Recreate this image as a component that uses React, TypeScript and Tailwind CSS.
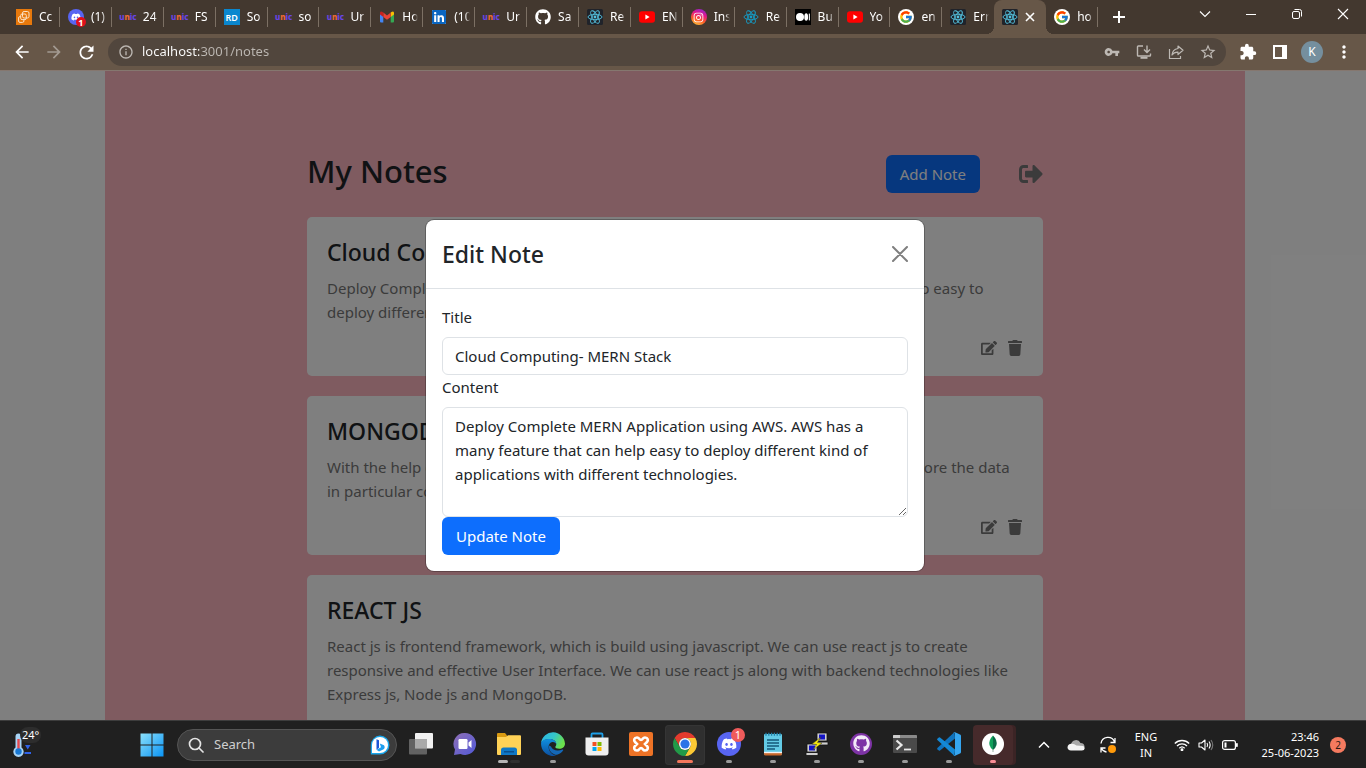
import React, { useId, useState } from "react";
import type { ReactNode } from "react";
import { FaDiscord, FaEdit, FaGithub, FaLinkedin, FaSignOutAlt, FaTrash, FaInstagram } from "react-icons/fa";
import { FcGoogle } from "react-icons/fc";
import { MdArrowBack, MdArrowForward, MdExtension, MdInfoOutline, MdMoreVert, MdRefresh, MdStarBorder, MdVpnKey } from "react-icons/md";

/* ---------- Favicons ---------- */

function AwsIcon() {
  return (
    <svg viewBox="0 0 16 16" className="size-4" aria-hidden="true">
      <rect width="16" height="16" fill="#e8790c" />
      <g fill="none" stroke="#fbe3c8" strokeWidth="1">
        <rect x="6.5" y="2.5" width="6.5" height="6.5" rx="1.6" />
        <rect x="4.7" y="5" width="5.6" height="5.6" rx="1.4" />
        <path d="M4.6 7.6H3.9Q2.6 7.6 2.6 9v3q0 1.4 1.4 1.4h2.5q1.4 0 1.4-1.4v-1.3" />
      </g>
    </svg>
  );
}

function DiscordBadgeIcon() {
  return (
    <span className="relative flex size-4 items-center justify-center rounded-full bg-[#5865f2] text-white">
      <FaDiscord size={10} />
      <span className="absolute -right-0.5 -bottom-0.5 flex size-2.5 items-center justify-center rounded-full bg-[#e0101c] text-[9px] leading-none font-bold">
        1
      </span>
    </span>
  );
}

function UnicIcon() {
  return (
    <span className="flex w-4 items-center justify-center text-[8px] leading-4 font-extrabold text-[#6a45e8]">
      u<span className="text-[#ee6a35]">n</span>ic
    </span>
  );
}

function RdIcon() {
  return (
    <span className="flex size-4 items-center justify-center bg-[#0a87cf] text-[9px] leading-none font-semibold text-white">
      RD
    </span>
  );
}

function GmailIcon() {
  return (
    <svg viewBox="0 0 16 16" className="size-4" aria-hidden="true">
      <path d="M1 4.2v8.3q0 1 1 1h2.3V7z" fill="#4285f4" />
      <path d="M15 4.2v8.3q0 1-1 1h-2.3V7z" fill="#34a853" />
      <path d="M11.7 3.6 13 2.7q2-1 2 1.3v1.4L11.7 8z" fill="#fbbc04" />
      <path d="M4.3 3.6 8 6.5l3.7-2.9V8L8 10.8 4.3 8z" fill="#ea4335" />
      <path d="M4.3 3.6 3 2.7Q1 1.700 1 4v1.400L4.300 8z" fill="#c5221f" />
    </svg>
  );
}

function LinkedinIcon() {
  return (
    <span className="flex size-4 items-center justify-center">
      <span className="flex size-3.5 items-center justify-center bg-white text-[#0a66c2]">
        <FaLinkedin size={16} className="shrink-0" />
      </span>
    </span>
  );
}

function ReactAtom({ color, tile }: { color: string; tile?: boolean }) {
  return (
    <svg viewBox="0 0 16 16" className="size-4" aria-hidden="true">
      {tile && <rect width="16" height="16" rx="1.500" fill="#20232a" />}
      <g fill="none" stroke={color} strokeWidth="0.900">
        <ellipse cx="8" cy="8" rx="7" ry="2.700" />
        <ellipse cx="8" cy="8" rx="7" ry="2.700" transform="rotate(60 8 8)" />
        <ellipse cx="8" cy="8" rx="7" ry="2.700" transform="rotate(120 8 8)" />
      </g>
      <circle cx="8" cy="8" r="1.400" fill={color} />
    </svg>
  );
}

function YoutubeIcon() {
  return (
    <svg viewBox="0 0 16 16" className="size-4" aria-hidden="true">
      <rect y="2.300" width="16" height="11.400" rx="3" fill="#f00" />
      <path d="M6.400 5.600 10.600 8l-4.200 2.400z" fill="#fff" />
    </svg>
  );
}

function InstagramIcon() {
  return (
    <span className="flex size-4 items-center justify-center rounded-full bg-[linear-gradient(20deg,#ffc93c_5%,#fb5a25_35%,#e3158c_65%,#7a2be0)] text-white">
      <FaInstagram size={11} />
    </span>
  );
}

function MediumIcon() {
  return (
    <svg viewBox="0 0 16 16" className="size-4" aria-hidden="true">
      <rect width="16" height="16" fill="#000" />
      <circle cx="5" cy="8" r="4" fill="#fff" />
      <ellipse cx="11.200" cy="8" rx="1.900" ry="3.800" fill="#fff" />
      <rect x="13.800" y="4.600" width="1.100" height="6.800" fill="#fff" />
    </svg>
  );
}

function GoogleIcon() {
  return (
    <span className="flex size-4 items-center justify-center rounded-full bg-white">
      <FcGoogle size={14} />
    </span>
  );
}

/* ---------- Browser chrome ---------- */

type Tab = { label: string; icon: ReactNode; active?: boolean };

const tabs: Tab[] = [
  { label: "Cc", icon: <AwsIcon /> },
  { label: "(1)", icon: <DiscordBadgeIcon /> },
  { label: "24", icon: <UnicIcon /> },
  { label: "FS", icon: <UnicIcon /> },
  { label: "So", icon: <RdIcon /> },
  { label: "so", icon: <UnicIcon /> },
  { label: "Ur", icon: <UnicIcon /> },
  { label: "Ho", icon: <GmailIcon /> },
  { label: "(10", icon: <LinkedinIcon /> },
  { label: "Ur", icon: <UnicIcon /> },
  { label: "Sa", icon: <FaGithub size={16} color="#fff" /> },
  { label: "Re", icon: <ReactAtom color="#53c1de" tile /> },
  { label: "EN", icon: <YoutubeIcon /> },
  { label: "Ins", icon: <InstagramIcon /> },
  { label: "Re", icon: <ReactAtom color="#149eca" /> },
  { label: "Bu", icon: <MediumIcon /> },
  { label: "Yo", icon: <YoutubeIcon /> },
  { label: "en", icon: <GoogleIcon /> },
  { label: "Err", icon: <ReactAtom color="#53c1de" tile /> },
  { label: "", icon: <ReactAtom color="#53c1de" tile />, active: true },
  { label: "ho", icon: <GoogleIcon /> },
];

function TabStrip() {
  return (
    <div className="flex h-[34px] shrink-0 bg-[#43382f] pl-2 text-white">
      <div className="flex max-w-[1090px] min-w-0 flex-1">
        {tabs.map((tab, i) =>
          tab.active ? (
            <div key={i} className="relative flex min-w-0 flex-1 items-center gap-1 rounded-t-lg bg-[#675748] pl-2">
              <span className="absolute bottom-0 -left-2 size-2 bg-[radial-gradient(circle_at_0_0,#43382f_8px,#675748_8px)]" />
              <span className="absolute -right-2 bottom-0 size-2 bg-[radial-gradient(circle_at_100%_0,#43382f_8px,#675748_8px)]" />
              <span className="flex size-4 shrink-0">{tab.icon}</span>
              <button aria-label="Close tab" className="flex size-4 items-center justify-center">
                <svg viewBox="0 0 16 16" className="size-4" aria-hidden="true">
                  <path d="m4 4 8 8m0-8-8 8" stroke="#fff" strokeWidth="1.600" />
                </svg>
              </button>
            </div>
          ) : (
            <button key={i} className="flex min-w-0 flex-1 items-center pl-2 text-left">
              <span className="mr-[7px] flex size-4 shrink-0 items-center">{tab.icon}</span>
              <span className="min-w-0 flex-1 overflow-hidden [mask-image:linear-gradient(90deg,#000_70%,transparent)] text-xs whitespace-nowrap">
                {tab.label}
              </span>
              <span className={tabs[i + 1]?.active ? "ml-1 h-5 w-px" : "ml-1 h-5 w-px bg-[#7c7064]"} />
            </button>
          ),
        )}
      </div>
      <button aria-label="New tab" className="flex w-[42px] items-center justify-center">
        <svg viewBox="0 0 14 14" className="size-3.5" aria-hidden="true">
          <path d="M7 1v12M1 7h12" stroke="#fff" strokeWidth="2" />
        </svg>
      </button>
      <div className="ml-auto flex h-7">
        <button aria-label="Search tabs" className="flex w-[46px] items-center justify-center">
          <svg viewBox="0 0 12 12" className="size-3" aria-hidden="true">
            <path d="m1 3.500 5 5 5-5" fill="none" stroke="#fff" strokeWidth="1.100" />
          </svg>
        </button>
        <button aria-label="Minimize" className="flex w-[46px] items-center justify-center">
          <span className="h-px w-2.5 bg-white" />
        </button>
        <button aria-label="Restore" className="flex w-[46px] items-center justify-center">
          <svg viewBox="0 0 12 12" className="size-3" fill="none" stroke="#fff" aria-hidden="true">
            <rect x="1.500" y="3.500" width="7" height="7" rx="1.500" />
            <path d="M3.500 1.500H8.500q2 0 2 2v5" />
          </svg>
        </button>
        <button aria-label="Close window" className="flex w-[46px] items-center justify-center">
          <svg viewBox="0 0 12 12" className="size-3" aria-hidden="true">
            <path d="m1 1 10 10M11 1 1 11" stroke="#fff" strokeWidth="1.100" />
          </svg>
        </button>
      </div>
    </div>
  );
}

function ToolButton({ label, children }: { label: string; children: ReactNode }) {
  return (
    <button aria-label={label} className="flex h-7 w-8 shrink-0 items-center justify-center">
      {children}
    </button>
  );
}

function Toolbar() {
  return (
    <div className="flex h-[37px] shrink-0 items-center border-b border-[#85776f] bg-[#675748] px-1.5 text-white">
      <ToolButton label="Back">
        <MdArrowBack size={20} />
      </ToolButton>
      <ToolButton label="Forward">
        <MdArrowForward size={20} className="text-[#a39a91]" />
      </ToolButton>
      <ToolButton label="Reload">
        <MdRefresh size={21} />
      </ToolButton>
      <div className="ml-1.5 flex h-7 min-w-0 flex-1 items-center rounded-full bg-[#51463d] pr-0.5 pl-2.5 text-[#bdb8b3]">
        <MdInfoOutline size={16} className="shrink-0" />
        <input
          aria-label="Address"
          defaultValue="localhost:3001/notes"
          className="ml-2 min-w-0 flex-1 bg-[linear-gradient(90deg,#fff_57px,#bdb8b3_57px)] bg-clip-text text-[13px] text-transparent outline-none"
        />
        <ToolButton label="Passwords">
          <MdVpnKey size={16} />
        </ToolButton>
        <ToolButton label="Install app">
          <svg viewBox="0 0 16 16" className="size-4" fill="none" stroke="currentColor" strokeWidth="1.400" aria-hidden="true">
            <path d="M7 2H2.300q-.8 0-.8.8v8.400q0 .8.8.8h11.400q.8 0 .8-.8V9.500" />
            <path d="M11 1.500v6.500M8 5.500l3 3 3-3" />
            <path d="M4.500 13.800h7" strokeWidth="2" />
          </svg>
        </ToolButton>
        <ToolButton label="Share">
          <svg viewBox="0 0 16 16" className="size-4" fill="none" stroke="currentColor" strokeWidth="1.200" aria-hidden="true">
            <path d="M1.500 5v9.500h11V12" />
            <path d="M10 2l5 4.300-5 4.200V8.200Q6 8 4 11q.4-5.600 6-6.500z" strokeLinejoin="round" />
          </svg>
        </ToolButton>
        <ToolButton label="Bookmark">
          <MdStarBorder size={18} />
        </ToolButton>
      </div>
      <div className="ml-1.5 flex">
        <ToolButton label="Extensions">
          <MdExtension size={18} />
        </ToolButton>
        <ToolButton label="Side panel">
          <svg viewBox="0 0 14 14" className="size-3.5" aria-hidden="true">
            <path d="M0 0h14v14H0zM2 2v10h7V2z" fill="#fff" fillRule="evenodd" />
          </svg>
        </ToolButton>
        <ToolButton label="Profile">
          <span className="flex size-[22px] items-center justify-center rounded-full bg-[#758f9e] text-xs leading-none">K</span>
        </ToolButton>
        <ToolButton label="Menu">
          <MdMoreVert size={20} />
        </ToolButton>
      </div>
    </div>
  );
}

/* ---------- Notes page ---------- */

const notes = [
  {
    title: "Cloud Computing- MERN Stack",
    content:
      "Deploy Complete MERN Application using AWS. AWS has a many feature that can help easy to deploy different kind of applications with different technologies.",
  },
  {
    title: "MONGODB",
    content:
      "With the help of MongoDB we can create the database and its collections and then store the data in particular collection.",
  },
  {
    title: "REACT JS",
    content:
      "React js is frontend framework, which is build using javascript. We can use react js to create responsive and effective User Interface. We can use react js along with backend technologies like Express js, Node js and MongoDB.",
  },
];

function NoteCard({ title, content }: { title: string; content: string }) {
  return (
    <article className="rounded-[5px] bg-white px-5 pt-[19px] pb-4">
      <h2 className="mb-2 text-[23px] leading-8 font-medium">{title}</h2>
      <p className="text-[15px] leading-6 text-[#777]">{content}</p>
      <div className="mt-3 flex h-6 items-center justify-end gap-2.5 text-[#777]">
        <button aria-label={`Edit ${title}`}>
          <FaEdit size={16} />
        </button>
        <button aria-label={`Delete ${title}`}>
          <FaTrash size={16} />
        </button>
      </div>
    </article>
  );
}

function EditModal({ onClose }: { onClose: () => void }) {
  const id = useId();
  return (
    <div className="absolute inset-0 flex items-center justify-center bg-black/50 pr-4">
      <div role="dialog" aria-labelledby={`${id}-h`} className="w-full max-w-[498px] rounded-lg bg-white shadow-[0_0_0_1px_rgba(0,0,0,0.25)]">
        <header className="flex items-center justify-between border-b border-[#dee2e6] p-4">
          <h2 id={`${id}-h`} className="text-[23px] leading-9 font-medium">
            Edit Note
          </h2>
          <button aria-label="Close" onClick={onClose} className="flex size-4 items-center justify-center text-[#7f7f7f]">
            <svg viewBox="0 0 16 16" className="size-4" aria-hidden="true">
              <path d="m1 1 14 14M15 1 1 15" stroke="currentColor" strokeWidth="2" strokeLinecap="round" />
            </svg>
          </button>
        </header>
        <form className="p-4 text-[15px] leading-6" onSubmit={(e) => e.preventDefault()}>
          <label htmlFor={`${id}-t`} className="mb-2 block">
            Title
          </label>
          <input
            id={`${id}-t`}
            defaultValue={notes[0].title}
            className="block h-[38px] w-full rounded-md border border-[#dee2e6] px-3 outline-none"
          />
          <label htmlFor={`${id}-c`} className="mb-2 block">
            Content
          </label>
          <textarea
            id={`${id}-c`}
            rows={4}
            defaultValue={notes[0].content}
            className="block h-[110px] w-full rounded-md border border-[#dee2e6] px-3 py-1.5 outline-none"
          />
          <button type="submit" className="block h-[38px] rounded-md bg-[#0d6efd] px-3.5 text-white">
            Update Note
          </button>
        </form>
      </div>
    </div>
  );
}

function NotesPage() {
  const [editing, setEditing] = useState(true);
  return (
    <main className="relative min-h-0 flex-1 overflow-hidden bg-white pr-4 text-[#212529]">
      <div className="mx-auto min-h-full max-w-[1140px] bg-[#ffb6c1] pt-21">
        <div className="mx-auto max-w-[736px]">
          <div className="flex h-[38px] items-center">
            <h1 className="self-start text-[31px] leading-8 font-medium">My Notes</h1>
            <button className="ml-auto h-[38px] rounded-md bg-[#0d6efd] px-3.5 text-[15px] leading-6 text-white">Add Note</button>
            <button aria-label="Sign out" className="ml-[39px] text-[#777]">
              <FaSignOutAlt size={24} />
            </button>
          </div>
          <div className="mt-6 flex flex-col gap-5">
            {notes.map((note) => (
              <NoteCard key={note.title} {...note} />
            ))}
          </div>
        </div>
      </div>
      {editing && <EditModal onClose={() => setEditing(false)} />}
    </main>
  );
}

/* ---------- Taskbar ---------- */

function WindowsLogo() {
  return (
    <svg viewBox="0 0 24 24" className="size-6" aria-hidden="true">
      <defs>
        <linearGradient id="win" x1="0" y1="0" x2="1" y2="1">
          <stop offset="0" stopColor="#8be0fb" />
          <stop offset="1" stopColor="#0a94f5" />
        </linearGradient>
      </defs>
      <path d="M.5.500h11v11H.5zM12.500.500h11v11h-11zM.5 12.500h11v11H.5zM12.500 12.500h11v11h-11z" fill="url(#win)" />
    </svg>
  );
}

function BingIcon() {
  return (
    <svg viewBox="0 0 20 20" className="size-5" aria-hidden="true">
      <path d="M10 .5A9.500 9.500 0 1 1 10 19.500H.8V10A9.500 9.500 0 0 1 10 .5z" fill="#18a5ea" />
      <path d="M10 2A8 8 0 1 1 10 18H2V10a8 8 0 0 1 8-8z" fill="#fff" />
      <path d="M6.500 4.200 9 5.200v7.500l-2.500 2z" fill="#1b56d8" />
      <path d="m6.500 14.700 4.500-2.500-1.200-3.700 4.200 1.700q1.700 2.800-.8 4.200L9 16.500z" fill="#1d9ff0" />
    </svg>
  );
}

function TaskViewIcon() {
  return (
    <svg viewBox="0 0 24 24" className="size-6" aria-hidden="true">
      <rect x="6" y="1" width="18" height="15.500" rx="1" fill="#f1f1f1" />
      <rect x="0" y="7" width="18" height="15.500" rx="1" fill="#6f6f6f" fillOpacity="0.850" />
      <rect x="6" y="7" width="12" height="9.500" fill="#a9a9a9" />
    </svg>
  );
}

function ChatIcon() {
  return (
    <svg viewBox="0 0 24 24" className="size-6" aria-hidden="true">
      <defs>
        <linearGradient id="chat" x1="0" y1="0" x2="1" y2="1">
          <stop offset="0" stopColor="#8f6fb5" />
          <stop offset="1" stopColor="#5159d8" />
        </linearGradient>
      </defs>
      <path d="M12 1a11 11 0 1 1-4.500 21L1 23l1-5.500A11 11 0 0 1 12 1z" fill="url(#chat)" />
      <rect x="5.500" y="7" width="9" height="10" rx="1.200" fill="#fff" />
      <path d="m15.500 10.500 3-2.500v8l-3-2.500z" fill="#fff" />
    </svg>
  );
}

function ExplorerIcon() {
  return (
    <svg viewBox="0 0 24 24" className="size-6" aria-hidden="true">
      <path d="M0 2q0-1 1-1h7l2 2.500V9H0z" fill="#d99a12" />
      <path d="M0 5h9l2-1.700h12q1 0 1 1V22q0 1-1 1H1q-1 0-1-1z" fill="#ffd257" />
      <path d="M4 23v-5q0-2.500 2.500-2.500h11q2.500 0 2.500 2.500v5z" fill="#0f78c6" />
      <path d="M7 19h10v1.500H7z" fill="#0a4f8c" />
    </svg>
  );
}

function EdgeIcon() {
  return (
    <svg viewBox="0 0 24 24" className="size-6" aria-hidden="true">
      <defs>
        <linearGradient id="edgeTop" x1="0" y1="0" x2="1" y2="0.400">
          <stop offset="0" stopColor="#29b4ea" />
          <stop offset="0.550" stopColor="#35c6c9" />
          <stop offset="1" stopColor="#6be04c" />
        </linearGradient>
        <linearGradient id="edgeLow" x1="0" y1="0" x2="0" y2="1">
          <stop offset="0" stopColor="#0f8fe0" />
          <stop offset="1" stopColor="#0c4f9f" />
        </linearGradient>
      </defs>
      <path d="M.1 11A12 12 0 0 1 24 11.500c0 3.500-2.700 5.300-5.700 5.300-2.500 0-4-.8-4-1.700 0-.7 1-1 1-3C15.300 9.500 12.500 7 8.700 7 4 7 .6 9.500.1 11z" fill="url(#edgeTop)" />
      <path d="M.1 11C.6 8.500 4 7 8.700 7c3.800 0 6.600 2.500 6.600 5-.8-1.500-2.300-2.200-3.800-2-3.200.5-4.500 3.600-3.600 7 .9 3.500 4 6 7.500 6.500A12 12 0 0 1 .1 11z" fill="url(#edgeLow)" />
      <path d="M8 13.500c-.9 5.500 4 9.500 8 9.300 2.800-.8 5-2.500 6.200-4.600.3-.7-.2-1-.8-.7-4.500 2.100-10 1-11.400-3z" fill="#1468b8" />
    </svg>
  );
}

function StoreIcon() {
  return (
    <svg viewBox="0 0 24 24" className="size-6" aria-hidden="true">
      <path d="M6.500 6V2.500q0-1 1-1h9q1 0 1 1V6" fill="none" stroke="#1ea0e8" strokeWidth="1.800" />
      <path d="M.5 5.500h23v15q0 3-3 3h-17q-3 0-3-3z" fill="#efefef" />
      <path d="M7.500 10h4v4h-4z" fill="#f25022" />
      <path d="M12.500 10h4v4h-4z" fill="#7fba00" />
      <path d="M7.500 15h4v4h-4z" fill="#00a4ef" />
      <path d="M12.500 15h4v4h-4z" fill="#ffb900" />
    </svg>
  );
}

function XamppIcon() {
  return (
    <svg viewBox="0 0 24 24" className="size-6" aria-hidden="true">
      <rect width="24" height="24" rx="2" fill="#ee7326" />
      <path
        d="M8 5.500c-3 0-3.500 3-2 4.500l2 2-2 2c-1.500 1.500-1 4.500 2 4.500 2.500 0 2-2.500 4-2.500s1.500 2.500 4 2.500c3 0 3.500-3 2-4.500l-2-2 2-2c1.500-1.500 1-4.500-2-4.500-2.500 0-2 2.500-4 2.500S10.500 5.500 8 5.500z"
        fill="none"
        stroke="#fff"
        strokeWidth="2.600"
      />
    </svg>
  );
}

function ChromeIcon() {
  return (
    <svg viewBox="0 0 24 24" className="size-6" aria-hidden="true">
      <path d="M1.610 6A12 12 0 0 1 22.390 6H12a6 6 0 0 0-5.200 9z" fill="#e33b2e" />
      <path d="M22.390 6A12 12 0 0 1 12 24l5.200-9A6 6 0 0 0 12 6z" fill="#fcc934" />
      <path d="M12 24A12 12 0 0 1 1.610 6l5.190 9a6 6 0 0 0 10.400 0z" fill="#229a48" />
      <circle cx="12" cy="12" r="6" fill="#fff" />
      <circle cx="12" cy="12" r="4.600" fill="#2a73e8" />
    </svg>
  );
}

function DiscordAppIcon() {
  return (
    <span className="relative flex size-6 items-center justify-center rounded-full bg-[#5865f2] text-white">
      <FaDiscord size={16} />
      <span className="absolute -top-1 -right-1 flex size-3.5 items-center justify-center rounded-full bg-[#ef5b5b] text-[11px] leading-none">
        1
      </span>
    </span>
  );
}

function NotepadIcon() {
  return (
    <svg viewBox="0 0 24 24" className="size-6" aria-hidden="true">
      <rect x="3" y="2" width="18" height="21" rx="1" fill="#63cbe6" />
      <path d="M3 20.500h18V22q0 1.500-1.500 1.500h-15Q3 23.500 3 22z" fill="#c9682b" />
      <path d="M3 19.800h18v1.400H3z" fill="#f3f3f3" />
      <path d="M5 .8v3M7.800.8v3M10.600.8v3M13.400.8v3M16.200.8v3M19 .8v3" stroke="#1e7fa8" strokeWidth="1.300" />
      <path d="M6 8h12M6 11h12M6 14h12M6 17h8" stroke="#14587a" strokeWidth="1.400" />
    </svg>
  );
}

function PuttyIcon() {
  return (
    <svg viewBox="0 0 24 24" className="size-6" aria-hidden="true">
      <path d="M12 1h10v8H12zM11 10h12v3H11z" fill="#cfcfcf" stroke="#111" strokeWidth="0.800" />
      <path d="M14 2.500h6v5h-6z" fill="#1414c8" />
      <path d="M2 12h10v8H2zM1 20.500h12v3H1z" fill="#cfcfcf" stroke="#111" strokeWidth="0.800" />
      <path d="M4 13.500h6v5H4z" fill="#1414c8" />
      <path d="m16 5-9 7 4.500.5L8 18l9-7-4.500-.5z" fill="#f7e90c" stroke="#333" strokeWidth="0.500" />
    </svg>
  );
}

function GithubDesktopIcon() {
  return (
    <span className="flex size-[22px] items-center justify-center rounded-full bg-[#7d33a5] text-[#f3eaf8]">
      <FaGithub size={17} />
    </span>
  );
}

function TerminalIcon() {
  return (
    <svg viewBox="0 0 24 24" className="size-6" aria-hidden="true">
      <rect y="3" width="24" height="18" rx="1" fill="#4a4a4a" />
      <path d="M0 4q0-1 1-1h22q1 0 1 1v2H0z" fill="#8a8a8a" />
      <path d="M0 4q0-1 1-1h6v3H0z" fill="#cdcdcd" />
      <path d="m3.500 8.500 5 4.500-5 4.500" fill="none" stroke="#e9e9e9" strokeWidth="2.200" />
      <path d="M11 17.500h7" stroke="#e9e9e9" strokeWidth="1.800" />
    </svg>
  );
}

function VsCodeIcon() {
  return (
    <svg viewBox="0 0 24 24" className="size-6" aria-hidden="true">
      <path d="M17.500 0 18 6.500 3 18.500q-.6.400-1.200 0L.4 17.200q-.6-.6 0-1.200z" fill="#0f74bf" />
      <path d="M17.500 24 18 17.500 3 5.500q-.6-.4-1.200 0L.4 6.800q-.6.600 0 1.200z" fill="#1489d6" />
      <path d="M17.500 24q-.9.200-1.500-.5 1.800.8 2-1.200V1.700Q17.800-.3 16 .5q.6-.7 1.500-.5l5.500 2.500q1 .4 1 1.500v16q0 1.100-1 1.500z" fill="#35a6f0" />
    </svg>
  );
}

function MongoIcon() {
  return (
    <svg viewBox="0 0 24 24" className="size-6" aria-hidden="true">
      <circle cx="12" cy="12" r="11" fill="#fff" />
      <path d="M12 3.500q-4.500 4.500-3.500 9.500 1 3.500 3.500 5z" fill="#10a05a" />
      <path d="M12 3.500q4.500 4.500 3.500 9.500-1 3.500-3.500 5z" fill="#0a6b47" />
      <path d="M11.600 17.500h.8v2.500h-.8z" fill="#7d9c8c" />
    </svg>
  );
}

type TaskbarApp = { name: string; icon: ReactNode; state?: "open" | "group" | "active" | "alert" };

const apps: TaskbarApp[] = [
  { name: "Task view", icon: <TaskViewIcon /> },
  { name: "Chat", icon: <ChatIcon /> },
  { name: "File Explorer", icon: <ExplorerIcon />, state: "group" },
  { name: "Edge", icon: <EdgeIcon />, state: "open" },
  { name: "Store", icon: <StoreIcon /> },
  { name: "XAMPP", icon: <XamppIcon /> },
  { name: "Chrome", icon: <ChromeIcon />, state: "active" },
  { name: "Discord", icon: <DiscordAppIcon />, state: "open" },
  { name: "Notepad", icon: <NotepadIcon />, state: "open" },
  { name: "PuTTY", icon: <PuttyIcon />, state: "open" },
  { name: "GitHub Desktop", icon: <GithubDesktopIcon />, state: "open" },
  { name: "Terminal", icon: <TerminalIcon />, state: "open" },
  { name: "VS Code", icon: <VsCodeIcon />, state: "open" },
  { name: "MongoDB Compass", icon: <MongoIcon />, state: "alert" },
];

const tileStyles = {
  none: "",
  open: "",
  group: "",
  active: "bg-[#2f2f2f] ring-1 ring-[#353535] ring-inset",
  alert: "bg-[#462a2b] shadow-[3px_0_0_#3b2425]",
};

const markStyles = {
  none: "w-1.5",
  open: "w-1.5 bg-[#9a9a9a]",
  group: "w-2.5 bg-[#b5b5b5] shadow-[12px_0_0_#303030] mr-3",
  active: "w-4 bg-[#f5775c]",
  alert: "w-1.5 bg-[#f88e96]",
};

function Taskbar() {
  return (
    <footer className="relative flex h-12 shrink-0 items-center border-t border-[#3d3d3d] bg-[#202020] pl-3 text-white">
      <button aria-label="Weather" className="relative flex h-10 w-[118px] items-center">
        <svg viewBox="0 0 20 24" className="h-6 w-5" aria-hidden="true">
          <path d="M3.500 3.500a3 3 0 0 1 6 0v11a5.200 5.200 0 1 1-6 0z" fill="#a8d3f5" />
          <path d="M5.300 6h2.400v10H5.300z" fill="#e5484d" />
          <circle cx="6.500" cy="18.500" r="3.200" fill="#1778d4" />
          <path d="M13 12h5.500l-2.750 4.500zM12.500 19h6.500v2h-6.500z" fill="#2f62e8" />
        </svg>
        <span className="absolute top-0.5 left-2 rounded-full bg-[#2d2d2d] px-0.5 text-[11px] leading-4">24°</span>
      </button>
      <button aria-label="Start" className="flex h-10 w-11 shrink-0 items-center justify-center">
        <WindowsLogo />
      </button>
      <label className="mr-0.5 ml-[3px] flex h-8 w-[220px] shrink-0 items-center rounded-full border border-[#555] bg-[#3c3c3c] pr-1.5 pl-2.5">
        <svg viewBox="0 0 16 16" className="size-4 shrink-0" fill="none" stroke="#e4e4e4" strokeWidth="1.700" aria-hidden="true">
          <circle cx="7" cy="7" r="5.500" />
          <path d="m11 11 4 4" strokeLinecap="round" />
        </svg>
        <input
          aria-label="Search"
          placeholder="Search"
          className="ml-2.5 min-w-0 flex-1 bg-transparent text-[13px] outline-none placeholder:text-[#cfcfcf]"
        />
        <BingIcon />
      </label>
      <nav className="flex">
        {apps.map(({ name, icon, state = "none" }) => (
          <button key={name} aria-label={name} className="flex w-11 justify-center">
            <span className={`flex h-10 w-10 flex-col items-center rounded pt-[7px] ${tileStyles[state]}`}>
              <span className="flex h-6 items-center">{icon}</span>
              <span className={`mt-1 h-[3px] rounded-full ${markStyles[state]}`} />
            </span>
          </button>
        ))}
      </nav>
      <div className="ml-auto flex items-center pr-5 text-[11px] leading-4">
        <button aria-label="Hidden icons" className="flex w-8 justify-center">
          <svg viewBox="0 0 12 12" className="size-3" aria-hidden="true">
            <path d="m1 8.500 5-5 5 5" fill="none" stroke="#fff" strokeWidth="1.500" />
          </svg>
        </button>
        <button aria-label="OneDrive" className="flex w-8 justify-center">
          <svg viewBox="0 0 18 12" className="h-3 w-[18px]" aria-hidden="true">
            <path d="M4 5.500A5 5 0 0 1 13.500 4 4 4 0 0 1 17.500 8L9 9z" fill="#a9a9a9" />
            <path d="M4.500 4.800Q7 4.500 9.500 6.500L16 7q1.700.5 1.700 2.200Q17.500 11.500 15 11.500H4Q.5 11.300.5 8.200q.3-3 4-3.400z" fill="#f4f4f4" />
          </svg>
        </button>
        <button aria-label="Updates" className="flex w-8 justify-center">
          <svg viewBox="0 0 18 18" className="size-[18px]" aria-hidden="true">
            <g fill="none" stroke="#fff" strokeWidth="1.300">
              <path d="M2 7.500A7 7 0 0 1 15.500 6M16 2v4.500h-4.500" />
              <path d="M2 16.500V12h4.500M2.500 12.500Q4 15.500 7.500 16" />
            </g>
            <circle cx="13" cy="13" r="4" fill="#ff9a0a" />
          </svg>
        </button>
        <button className="w-11 text-center">
          ENG
          <br />
          IN
        </button>
        <button aria-label="Network, volume and battery" className="flex w-[76px] items-center justify-center gap-2">
          <svg viewBox="0 0 16 12" className="h-3 w-4" fill="none" stroke="#fff" strokeWidth="1.300" aria-hidden="true">
            <path d="M.8 4.500a10.200 10.200 0 0 1 14.400 0M3 7a7 7 0 0 1 10 0M5.300 9.200a3.900 3.900 0 0 1 5.400 0" />
            <circle cx="8" cy="10.800" r="0.800" fill="#fff" />
          </svg>
          <svg viewBox="0 0 16 14" className="h-3.5 w-4" fill="none" stroke="#fff" strokeWidth="1.100" aria-hidden="true">
            <path d="M1 5v4h2.500L7 12V2L3.500 5z" strokeLinejoin="round" />
            <path d="M9 5q1.200 2 0 4M11 3.500q2.300 3.500 0 7" />
            <path d="M13 2q3.500 5 0 10" stroke="#777" />
          </svg>
          <svg viewBox="0 0 16 10" className="h-2.5 w-4" aria-hidden="true">
            <rect x="0.600" y="0.600" width="12.800" height="8.800" rx="2" fill="none" stroke="#fff" strokeWidth="1.200" />
            <rect x="2.500" y="2.500" width="2" height="5" fill="#fff" />
            <rect x="14" y="3" width="1.800" height="4" rx="0.800" fill="#fff" />
          </svg>
        </button>
        <button className="w-[75px] text-right">
          23:46
          <br />
          25-06-2023
        </button>
        <button className="ml-[11px] flex size-4 items-center justify-center rounded-full bg-[#f57a5f] text-[10px] leading-none text-[#2a1a16]">2</button>
      </div>
    </footer>
  );
}

export default function App() {
  return (
    <div className="flex h-screen flex-col overflow-hidden font-['Noto_Sans','Open_Sans',sans-serif]">
      <TabStrip />
      <Toolbar />
      <NotesPage />
      <Taskbar />
    </div>
  );
}
